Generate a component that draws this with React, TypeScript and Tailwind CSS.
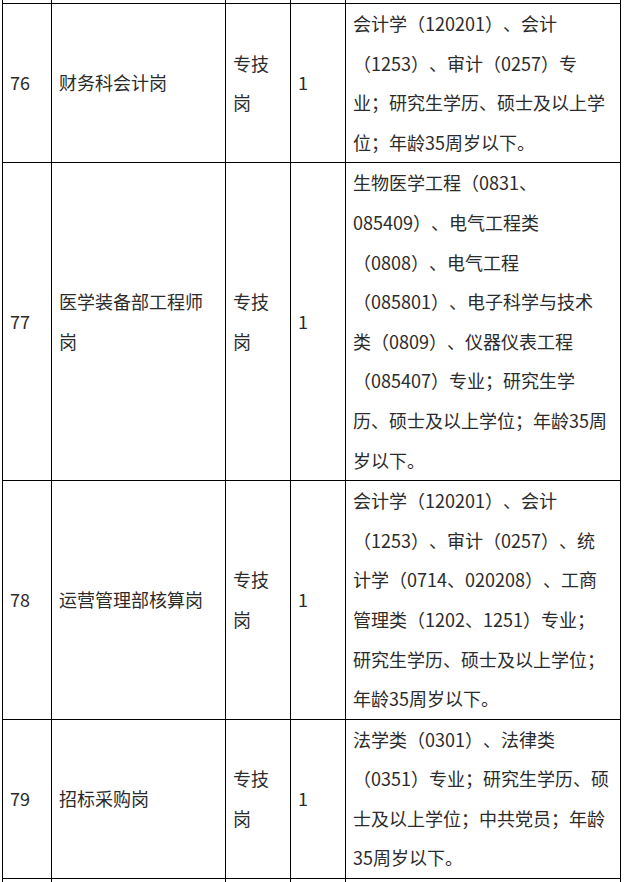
import React from "react";

type Row = { no: string; name: string[]; type: string[]; count: string; req: string[] };

const rows: Row[] = [
  {
    no: "76",
    name: ["财务科会计岗"],
    type: ["专技", "岗"],
    count: "1",
    req: [
      "会计学（120201）、会计",
      "（1253）、审计（0257）专",
      "业；研究生学历、硕士及以上学",
      "位；年龄35周岁以下。",
    ],
  },
  {
    no: "77",
    name: ["医学装备部工程师", "岗"],
    type: ["专技", "岗"],
    count: "1",
    req: [
      "生物医学工程（0831、",
      "085409）、电气工程类",
      "（0808）、电气工程",
      "（085801）、电子科学与技术",
      "类（0809）、仪器仪表工程",
      "（085407）专业；研究生学",
      "历、硕士及以上学位；年龄35周",
      "岁以下。",
    ],
  },
  {
    no: "78",
    name: ["运营管理部核算岗"],
    type: ["专技", "岗"],
    count: "1",
    req: [
      "会计学（120201）、会计",
      "（1253）、审计（0257）、统",
      "计学（0714、020208）、工商",
      "管理类（1202、1251）专业；",
      "研究生学历、硕士及以上学位；",
      "年龄35周岁以下。",
    ],
  },
  {
    no: "79",
    name: ["招标采购岗"],
    type: ["专技", "岗"],
    count: "1",
    req: [
      "法学类（0301）、法律类",
      "（0351）专业；研究生学历、硕",
      "士及以上学位；中共党员；年龄",
      "35周岁以下。",
    ],
  },
];

const cell = "border-r border-b border-black flex items-center px-[7px]";

function Lines({ lines }: { lines: string[] }) {
  return (
    <div className="flex flex-col">
      {lines.map((l, i) => (
        <span key={i} className="block whitespace-nowrap">
          {l}
        </span>
      ))}
    </div>
  );
}

export default function App() {
  return (
    <div className="w-[625px] h-[882px] overflow-hidden bg-white">
      <div
        className="ml-[2px] w-[619px] border-l border-black text-[18px] leading-[39.6px] text-[#2b2b2b] [text-spacing-trim:space-all] [font-family:'Microsoft_YaHei','Noto_Sans_CJK_SC',sans-serif]"
      >
        <div className="grid grid-cols-[49px_174px_65px_55px_275px]">
          <div className="h-[4px] border-r border-b border-black" />
          <div className="h-[4px] border-r border-b border-black" />
          <div className="h-[4px] border-r border-b border-black" />
          <div className="h-[4px] border-r border-b border-black" />
          <div className="h-[4px] border-r border-b border-black" />
        </div>
        {rows.map((r) => (
          <div key={r.no} className="grid grid-cols-[49px_174px_65px_55px_275px]">
            <div className={cell}>{r.no}</div>
            <div className={cell}>
              <Lines lines={r.name} />
            </div>
            <div className={cell}>
              <Lines lines={r.type} />
            </div>
            <div className={cell}>{r.count}</div>
            <div className={cell}>
              <Lines lines={r.req} />
            </div>
          </div>
        ))}
        <div className="grid grid-cols-[49px_174px_65px_55px_275px]">
          <div className="h-[10px] border-r border-black" />
          <div className="h-[10px] border-r border-black" />
          <div className="h-[10px] border-r border-black" />
          <div className="h-[10px] border-r border-black" />
          <div className="h-[10px] border-r border-black" />
        </div>
      </div>
    </div>
  );
}
